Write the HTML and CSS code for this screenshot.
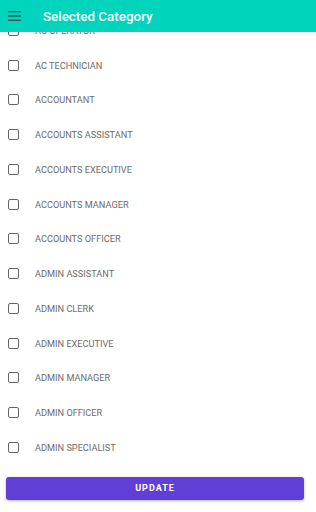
FILE: index.html
```html
<!DOCTYPE html>
<html lang="en">
<head>
    <meta charset="UTF-8">
    <meta name="viewport" content="width=device-width, initial-scale=1.0">
    <title>Selected Category</title>
    <link rel="stylesheet" href="styles.css">
</head>
<body>
    <header class="app-bar">
        <svg class="menu-icon" width="14" height="10" viewBox="0 0 14 10">
            <rect x="0" y="0" width="13" height="1.4" fill="#1b5f55"/>
            <rect x="0" y="4.3" width="13" height="1.4" fill="#1b5f55"/>
            <rect x="0" y="8.6" width="13" height="1.4" fill="#1b5f55"/>
        </svg>
        <h1>Selected Category</h1>
    </header>
    <ul class="category-list">
        <li><span class="box"></span>AC OPERATOR</li>
        <li><span class="box"></span>AC TECHNICIAN</li>
        <li><span class="box"></span>ACCOUNTANT</li>
        <li><span class="box"></span>ACCOUNTS ASSISTANT</li>
        <li><span class="box"></span>ACCOUNTS EXECUTIVE</li>
        <li><span class="box"></span>ACCOUNTS MANAGER</li>
        <li><span class="box"></span>ACCOUNTS OFFICER</li>
        <li><span class="box"></span>ADMIN ASSISTANT</li>
        <li><span class="box"></span>ADMIN CLERK</li>
        <li><span class="box"></span>ADMIN EXECUTIVE</li>
        <li><span class="box"></span>ADMIN MANAGER</li>
        <li><span class="box"></span>ADMIN OFFICER</li>
        <li><span class="box"></span>ADMIN SPECIALIST</li>
        <li><span class="box"></span>ADMIN SUPERVISOR</li>
    </ul>
    <div class="footer">
        <button type="button">UPDATE</button>
    </div>
</body>
</html>
```

FILE: styles.css
```css
body {
    margin: 0;
    font-family: Roboto, "Liberation Sans", Arial, sans-serif;
    background: #fff;
    width: 316px;
    height: 512px;
    overflow: hidden;
    position: relative;
}

.app-bar {
    position: absolute;
    top: 0;
    left: 0;
    right: 0;
    height: 32px;
    background: #00d4bd;
    display: flex;
    align-items: center;
    z-index: 2;
}
.menu-icon {
    margin-left: 8px;
}
.app-bar h1 {
    margin: 0 0 0 21px;
    font-size: 13.4px;
    font-weight: 500;
    color: #fff;
}

.category-list {
    list-style: none;
    margin: 0;
    padding: 13px 0 0;
}
.category-list li {
    height: 34.75px;
    display: flex;
    align-items: center;
    font-size: 9.2px;
    color: #6b6b6b;
}
.box {
    width: 9px;
    height: 9px;
    border: 1.5px solid #666;
    border-radius: 2px;
    margin: 0 16px 0 8px;
}

.footer {
    position: absolute;
    left: 6px;
    right: 12px;
    top: 476px;
    z-index: 2;
}
.footer button {
    width: 100%;
    height: 23px;
    border: none;
    border-radius: 3px;
    background: #5f3fd6;
    color: #fff;
    font-family: Roboto, "Liberation Sans", Arial, sans-serif;
    font-size: 9px;
    font-weight: 700;
    letter-spacing: 1px;
    box-shadow: 0 1px 3px rgba(0,0,0,0.3);
}
```
